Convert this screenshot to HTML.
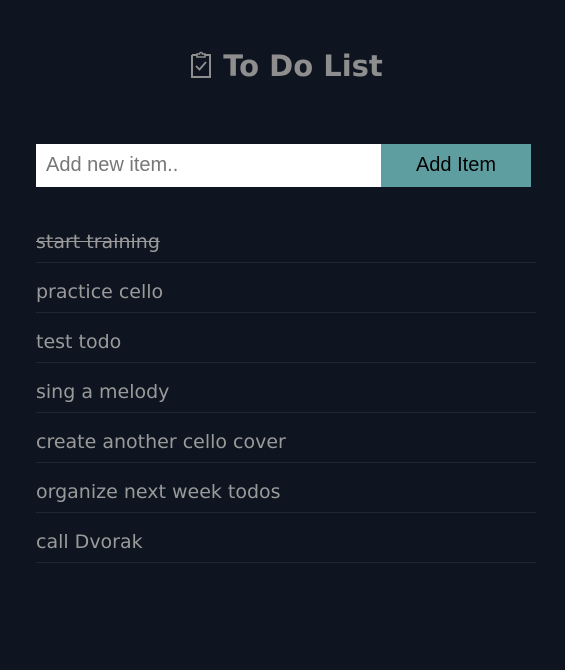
<!DOCTYPE html>
<html><head><style>
body{margin:0;background:#0e1520;width:565px;height:670px;overflow:hidden;font-family:"DejaVu Sans",Verdana,sans-serif;}
h1{position:absolute;left:0;width:565px;top:46px;margin:0;text-align:center;color:#8e8e8e;font-size:29px;font-weight:bold;line-height:40px;padding-left:8px;box-sizing:border-box;}
h1 svg{vertical-align:-3px;margin-right:11px}
.inp{position:absolute;left:36px;top:144px;width:345px;height:43px;background:#fff;}
.inp span{position:absolute;left:10px;top:10px;font:20px "Liberation Sans",Arial,sans-serif;color:#777;}
.btn{position:absolute;left:381px;top:144px;width:150px;height:43px;background:#5f9ea0;font:20px "Liberation Sans",Arial,sans-serif;color:#000;text-align:center;line-height:43px;}
ul{position:absolute;left:36px;top:213px;width:500px;margin:0;padding:0;list-style:none;}
li{height:49px;border-bottom:1px solid #1f2733;color:#9a9a9a;font-size:19px;line-height:58px;}
.done{text-decoration:line-through;}
</style></head><body>
<h1><svg width="22" height="30" viewBox="0 0 22 30"><path d="M2 6h5M15 6h5v22H2V6" fill="none" stroke="#8e8e8e" stroke-width="2"/><path d="M7 8V5h2.5a1.5 1.5 0 0 1 3 0H15v3z" fill="none" stroke="#8e8e8e" stroke-width="1.6"/><path d="M6 17l3.5 3.5L16 13" fill="none" stroke="#8e8e8e" stroke-width="1.8"/></svg>To Do List</h1>
<div class="inp"><span>Add new item..</span></div>
<div class="btn">Add Item</div>
<ul>
<li class="done">start training</li>
<li>practice cello</li>
<li>test todo</li>
<li>sing a melody</li>
<li>create another cello cover</li>
<li>organize next week todos</li>
<li>call Dvorak</li>
</ul>
</body></html>
